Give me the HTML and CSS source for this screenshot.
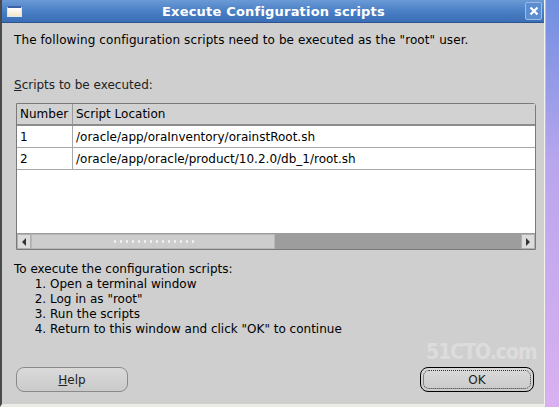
FILE: index.html
```html
<!DOCTYPE html>
<html lang="en">
<head>
    <meta charset="UTF-8">
    <title>Execute Configuration scripts</title>
    <link rel="stylesheet" href="styles.css">
</head>
<body>
    <div class="screen">
        <div class="dialog">
            <div class="titlebar">
                <span class="win-icon"></span>
                <span class="title">Execute Configuration scripts</span>
                <span class="close">
                    <svg width="10" height="10" viewBox="0 0 10 10"><path d="M1.5 1.5 L8.5 8.5 M8.5 1.5 L1.5 8.5" stroke="#fff" stroke-width="2.2"/></svg>
                </span>
            </div>

            <div class="content">
                <p class="intro">The following configuration scripts need to be executed as the "root" user.</p>

                <p class="label"><u>S</u>cripts to be executed:</p>

                <div class="table-box">
                    <table class="scripts">
                        <thead>
                            <tr><th class="num">Number</th><th>Script Location</th></tr>
                        </thead>
                        <tbody>
                            <tr><td class="num">1</td><td>/oracle/app/oraInventory/orainstRoot.sh</td></tr>
                            <tr><td class="num">2</td><td>/oracle/app/oracle/product/10.2.0/db_1/root.sh</td></tr>
                        </tbody>
                    </table>
                    <div class="filler"></div>
                    <div class="hscroll">
                        <span class="arrow left">
                            <svg width="6" height="8" viewBox="0 0 6 8"><path d="M5 0 L1 4 L5 8 Z" fill="#333"/></svg>
                        </span>
                        <span class="thumb"><span class="grip"></span></span>
                        <span class="track"></span>
                        <span class="arrow right">
                            <svg width="6" height="8" viewBox="0 0 6 8"><path d="M1 0 L5 4 L1 8 Z" fill="#333"/></svg>
                        </span>
                    </div>
                </div>

                <div class="steps">
                    <p>To execute the configuration scripts:</p>
                    <ol>
                        <li>Open a terminal window</li>
                        <li>Log in as "root"</li>
                        <li>Run the scripts</li>
                        <li>Return to this window and click "OK" to continue</li>
                    </ol>
                </div>

                <div class="buttons">
                    <button class="btn"><u>H</u>elp</button>
                    <button class="btn ok"><span class="focus">OK</span></button>
                </div>
            </div>
            <div class="watermark">51CTO.com</div>
        </div>
        <div class="desktop"></div>
    </div>
</body>
</html>
```

FILE: styles.css
```css
body {
    margin: 0;
    font-family: 'DejaVu Sans', sans-serif;
    font-size: 12px;
    color: #000;
    background: #cfcfcf;
}
.screen {
    display: flex;
    width: 559px;
    height: 407px;
    overflow: hidden;
}
.dialog {
    position: relative;
    width: 545px;
    display: flex;
    flex-direction: column;
    background: #cfcfcf;
    border-left: 2px solid #4a4a4a;
    border-right: 1px solid #f2f2ea;
    border-bottom: 3px solid #ececE4;
    box-sizing: border-box;
}
.desktop {
    flex: 1;
    background: linear-gradient(#6f8fe0, #b9a6ee 40%, #dab0f0);
    border-left: 1px solid #bfbfbf;
}
.titlebar {
    height: 22px;
    display: flex;
    align-items: center;
    background: linear-gradient(#6b9ad6, #4a80c6 50%, #3a6db5);
    border-bottom: 1px solid #2c5590;
}
.win-icon {
    width: 13px;
    height: 8px;
    margin-left: 5px;
    background: linear-gradient(#fff, #f4e6c8);
    border: 1px solid #dde8f5;
    border-top: 2px solid #3a62a0;
}
.title {
    flex: 1;
    text-align: center;
    color: #fff;
    font-weight: bold;
    font-size: 13px;
    letter-spacing: 0.2px;
}
.close {
    width: 15px;
    height: 16px;
    margin-right: 2px;
    display: flex;
    align-items: center;
    justify-content: center;
    background: #5b8dd0;
    border: 1px solid #9fbbe4;
    border-radius: 2px;
}
.content {
    flex: 1;
    padding: 0 0 0 12px;
    display: flex;
    flex-direction: column;
}
.intro {
    margin: 10px 0 0 0;
    letter-spacing: 0.1px;
}
.label {
    margin: 31px 0 0 0;
    color: #222;
}
.table-box {
    margin: 11px 0 0 2px;
    width: 518px;
    height: 145px;
    border: 1px solid #7a7a7a;
    border-radius: 0 3px 0 0;
    background: #fff;
    display: flex;
    flex-direction: column;
}
.scripts {
    border-collapse: collapse;
    width: 100%;
}
.scripts th {
    background: #d2d2d2;
    font-weight: normal;
    text-align: left;
    height: 20px;
    padding: 0 3px;
    border-bottom: 2px solid #8c8c8c;
    border-left: 1px solid #fafafa;
}
.scripts th.num {
    border-left: none;
    border-right: 1px solid #9a9a9a;
}
.scripts td {
    height: 21px;
    padding: 0 3px;
    border-bottom: 1px solid #a8a8a8;
}
.scripts .num {
    width: 49px;
    border-right: 1px solid #a8a8a8;
}
.filler {
    flex: 1;
}
.hscroll {
    height: 15px;
    display: flex;
    border-top: 1px solid #9a9a9a;
    background: #c8c8c8;
}
.arrow {
    width: 14px;
    display: flex;
    align-items: center;
    justify-content: center;
    background: #dcdcdc;
    border: 1px solid #b0b0b0;
    box-sizing: border-box;
}
.thumb {
    width: 244px;
    display: flex;
    align-items: center;
    justify-content: center;
    background: #cdcdcd;
    border: 1px solid #b8b8b8;
    box-sizing: border-box;
}
.grip {
    width: 82px;
    height: 5px;
    background: radial-gradient(circle, #f4f4f4 1px, transparent 1.5px) 0 0 / 6px 5px;
}
.track {
    flex: 1;
    background: #9d9d9d;
}
.steps {
    margin-top: 12px;
    line-height: 15px;
}
.steps p {
    margin: 0;
}
.steps ol {
    margin: 0;
    padding-left: 36px;
}
.buttons {
    margin-top: 30px;
    display: flex;
    justify-content: space-between;
    width: 518px;
    margin-left: 2px;
}
.btn {
    width: 112px;
    height: 25px;
    font-family: 'DejaVu Sans', sans-serif;
    font-size: 12px;
    color: #222;
    background: linear-gradient(#dadada, #cacaca);
    border: 1px solid #8a8a8a;
    border-radius: 8px;
    padding: 0;
}
.btn.ok {
    width: 114px;
    border-color: #000;
    padding: 2px;
}
.focus {
    display: block;
    height: 100%;
    line-height: 19px;
    border: 1px dotted #333;
    border-radius: 6px;
    box-sizing: border-box;
}
.watermark {
    position: absolute;
    left: 424px;
    top: 340px;
    font-family: 'DejaVu Sans Condensed', sans-serif;
    font-weight: bold;
    font-size: 21px;
    letter-spacing: -1px;
    line-height: 24px;
    color: rgba(255, 255, 255, 0.3);
    pointer-events: none;
}
```
